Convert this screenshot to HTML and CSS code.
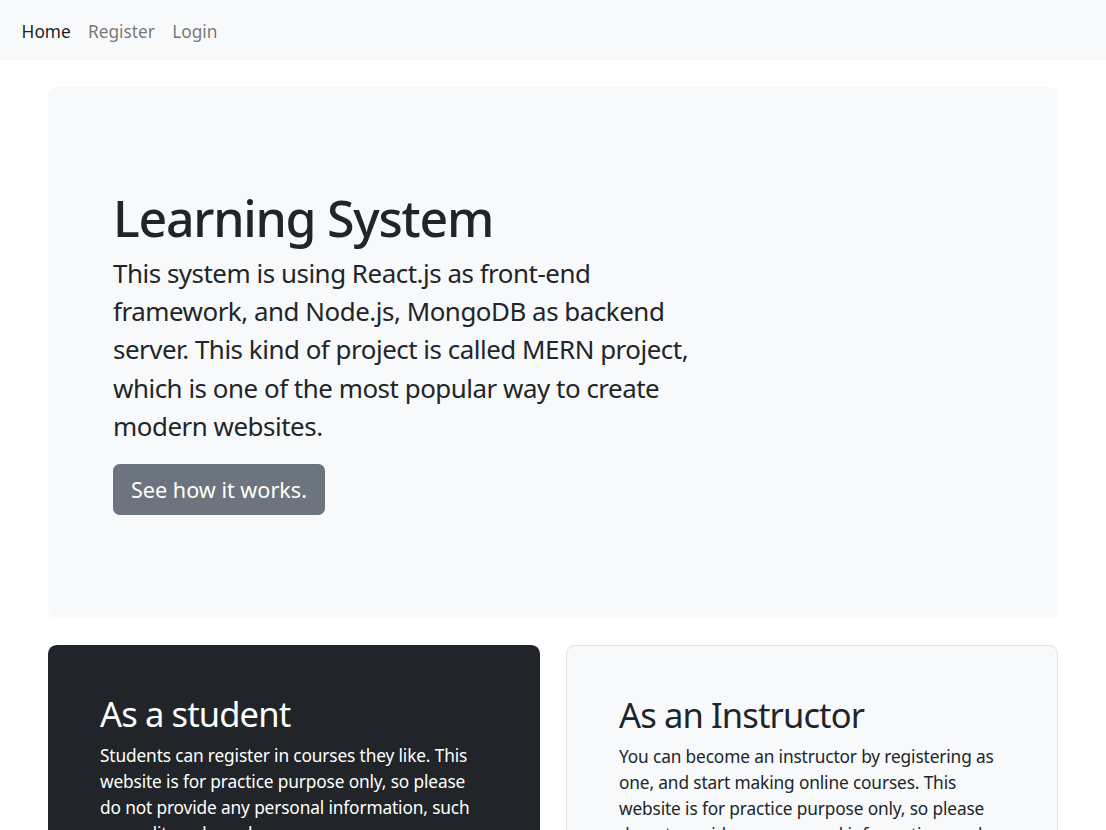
FILE: index.html
```html
<!DOCTYPE html>
<html lang="en">
<head>
<meta charset="utf-8">
<title>Learning System</title>
<link rel="stylesheet" href="styles.css">
</head>
<body>
<nav class="navbar">
  <ul class="nav-list">
    <li><a class="nav-link active" href="#">Home</a></li>
    <li><a class="nav-link" href="#">Register</a></li>
    <li><a class="nav-link" href="#">Login</a></li>
  </ul>
</nav>
<main class="main">
  <section class="jumbotron">
    <h1 class="display">Learning System</h1>
    <p class="lead">This system is using React.js as front-end framework, and Node.js, MongoDB as backend server. This kind of project is called MERN project, which is one of the most popular way to create modern websites.</p>
    <button class="btn" type="button">See how it works.</button>
  </section>
  <div class="cards">
    <div class="card card-dark">
      <h2 class="card-title">As a student</h2>
      <p class="card-text">Students can register in courses they like. This website is for practice purpose only, so please do not provide any personal information, such as credit card numbers.</p>
    </div>
    <div class="card card-light">
      <h2 class="card-title">As an Instructor</h2>
      <p class="card-text">You can become an instructor by registering as one, and start making online courses. This website is for practice purpose only, so please do not provide any personal information, such as credit card numbers.</p>
    </div>
  </div>
</main>
</body>
</html>
```
FILE: styles.css
```css
* { box-sizing: border-box; }
html, body { margin: 0; padding: 0; }
body {
  font-family: "Noto Sans", "Open Sans", sans-serif;
  color: #212529;
  background: #fff;
  font-size: 17.3px;
  line-height: 1.5;
}
.navbar {
  background: #f8f9fa;
  height: 60px;
  padding: 0 13px;
  display: flex;
  align-items: center;
}
.nav-list {
  list-style: none;
  margin: 0;
  padding: 0;
  display: flex;
}
.nav-link {
  display: block;
  padding: 10px 8.6px 7px;
  font-size: 17.3px;
  line-height: 26px;
  color: rgba(0,0,0,.55);
  text-decoration: none;
}
.nav-link.active { color: rgba(0,0,0,.9); }
.main {
  padding: 27px 48px 0;
}
.jumbotron {
  background: #f8f9fa;
  border-radius: 8.6px;
  padding: 104px 65px 103px;
  margin-bottom: 27px;
}
.display {
  font-size: 50px;
  line-height: 54px;
  font-weight: 500;
  letter-spacing: -0.025em;
  margin: 0 0 9px;
}
.lead {
  width: 66.6667%;
  font-size: 25.9px;
  line-height: 38.2px;
  font-weight: 400;
  letter-spacing: -0.018em;
  margin: 0 0 19px;
}
.btn {
  font-family: inherit;
  font-size: 21.6px;
  line-height: 32px;
  padding: 8.6px 17px;
  color: #fff;
  background: #6c757d;
  border: 1px solid #6c757d;
  border-radius: 6.5px;
  cursor: pointer;
}
.cards {
  display: grid;
  grid-template-columns: 1fr 1fr;
  gap: 26px;
}
.card {
  border-radius: 8.6px;
  padding: 48px 52px 52px;
  min-height: 300px;
}
.card-dark {
  background: #212529;
  color: #fff;
}
.card-light {
  background: #f8f9fa;
  border: 1px solid #dee2e6;
}
.card-title {
  font-size: 34.5px;
  line-height: 41px;
  font-weight: 400;
  letter-spacing: -0.025em;
  margin: 0 0 8.6px;
}
.card-text {
  font-size: 17.3px;
  line-height: 26px;
  letter-spacing: -0.008em;
  margin: 0 0 17px;
}
```
